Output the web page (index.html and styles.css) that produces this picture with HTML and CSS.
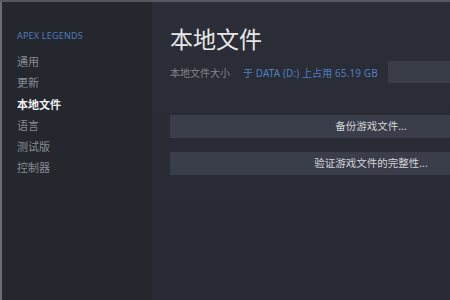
FILE: index.html
```html
<!doctype html>
<html lang="zh-CN">
<head>
    <meta charset="UTF-8">
    <title>本地文件</title>
    <link rel="stylesheet" href="styles.css">
</head>
<body>
<div class="app">
    <div class="sidebar">
        <div class="game_title">APEX LEGENDS</div>
        <ul class="menu">
            <li class="menu_item">通用</li>
            <li class="menu_item">更新</li>
            <li class="menu_item active">本地文件</li>
            <li class="menu_item">语言</li>
            <li class="menu_item">测试版</li>
            <li class="menu_item">控制器</li>
        </ul>
    </div>
    <div class="main">
        <h1 class="page_title">本地文件</h1>
        <div class="size_row">
            <span class="size_label">本地文件大小</span>
            <span class="size_value">于 DATA (D:) 上占用 65.19 GB</span>
            <div class="size_box"></div>
        </div>
        <div class="btn">备份游戏文件...</div>
        <div class="btn">验证游戏文件的完整性...</div>
    </div>
</div>
</body>
</html>
```

FILE: styles.css
```css
ul, li {
    margin: 0;
    padding: 0;
    list-style: none;
}

body {
    margin: 0;
    height: 300px;
    overflow: hidden;
    background: #282b33;
    border-top: 2px solid #55585e;
    box-sizing: border-box;
    font-family: "Noto Sans", "Noto Sans CJK SC", sans-serif;
}

.app {
    display: flex;
    height: 298px;
}

.sidebar {
    flex: none;
    width: 152px;
    border-left: 2px solid #6a6d72;
    background: #24272e;
    padding: 27px 0 0 15px;
    box-sizing: border-box;
}

.game_title {
    font-size: 9px;
    line-height: 14px;
    color: #4f7dbb;
    letter-spacing: 0.2px;
    margin-bottom: 8px;
}

.menu_item {
    font-size: 11px;
    line-height: 21.3px;
    color: #878b92;
}

.menu_item.active {
    color: #f2f2f2;
    font-weight: bold;
}

.main {
    flex: 1;
    min-width: 0;
    overflow: hidden;
    padding: 22px 0 0 18px;
    background: linear-gradient(#2b2e36, #272a32);
}

.page_title {
    margin: 0;
    font-size: 23px;
    line-height: 30px;
    font-weight: normal;
    color: #e6e7e9;
}

.size_row {
    display: flex;
    align-items: center;
    height: 22px;
    margin-top: 7px;
    font-size: 10px;
}

.size_label {
    color: #80848b;
}

.size_value {
    color: #4d7fc4;
    margin-left: 13px;
    letter-spacing: 0.1px;
    white-space: nowrap;
}

.size_box {
    flex: 1;
    height: 22px;
    margin-left: 10px;
    background: #393d48;
}

.btn {
    width: 402px;
    height: 23px;
    line-height: 23px;
    background: #3a3e4a;
    color: #d2d4d8;
    font-size: 10.5px;
    text-align: center;
    margin-top: 32px;
}

.btn + .btn {
    margin-top: 14px;
}
```
